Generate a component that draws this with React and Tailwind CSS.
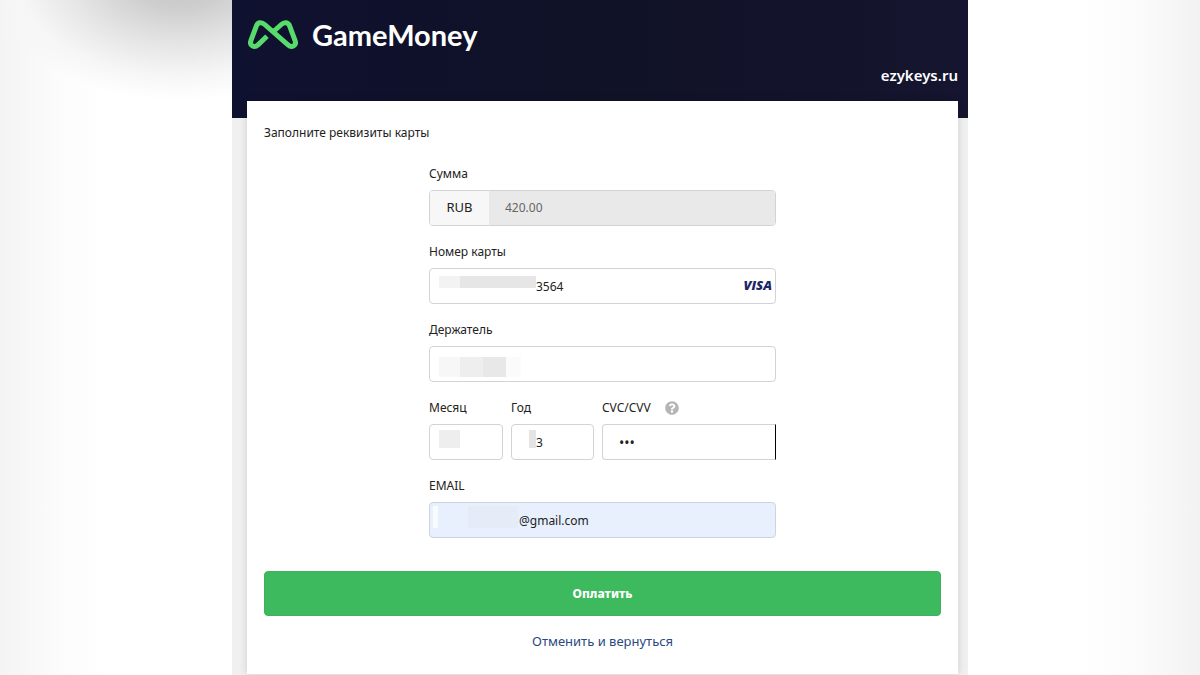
import { FaQuestionCircle } from "react-icons/fa";

const inputStyle =
  "block h-9 w-full rounded border border-[#d3d3d3] bg-white text-[#222] outline-none";

const Logo = () => (
  <svg width="50" height="30" viewBox="0 0 50 30" fill="none" aria-hidden="true">
    <path
      d="M19 16.2 10 24.9C6.2 28.4 1.2 25.6 2.9 20.6L8.2 6.4C9.6 2.2 13.4 1.5 16.7 4.5L40 24.9C43.8 28.4 48.8 25.6 47.1 20.6L41.8 6.4C40.4 2.2 36.6 1.5 33.3 4.5L25 12"
      stroke="#57dc6c"
      strokeWidth="5"
      strokeLinejoin="round"
    />
  </svg>
);

// Hides the private part of a value behind flat blocks
const Mask = ({ className, blocks }) => (
  <span className={`pointer-events-none absolute flex ${className}`}>
    {blocks.map((block, index) => (
      <span key={index} className={block} />
    ))}
  </span>
);

const Field = ({ id, label, hint, className = "", children }) => (
  <div className={className}>
    <div className="mb-1.5 flex h-5 items-center gap-3.5">
      <label htmlFor={id} className="text-xs leading-5">
        {label}
      </label>
      {hint}
    </div>
    <div className="relative">{children}</div>
  </div>
);

const PaymentForm = () => (
  <form onSubmit={(e) => e.preventDefault()}>
    <div className="mx-auto mt-[21px] flex max-w-[347px] flex-col gap-4">
      <Field id="amount" label="Сумма">
        <div className="flex h-9 overflow-hidden rounded border border-[#d3d3d3]">
          <span className="flex w-[59px] items-center justify-center bg-[#f7f7f7] text-[13px]">
            RUB
          </span>
          <input
            id="amount"
            type="text"
            defaultValue="420.00"
            disabled
            className="min-w-0 flex-1 bg-[#e9e9e9] px-4 text-xs text-[#666]"
          />
        </div>
      </Field>

      <Field id="card" label="Номер карты">
        <input
          id="card"
          type="text"
          defaultValue="3564"
          className={`${inputStyle} pr-10 pl-[106px] text-xs`}
        />
        <Mask
          className="top-2 left-2.5 h-3"
          blocks={["w-[21px] bg-[#f3f3f3]", "w-[76px] bg-[#e6e6e6]"]}
        />
        <span className="pointer-events-none absolute inset-y-0 right-1 flex items-center font-['Open_Sans'] text-[13px] font-extrabold text-[#1b2668] italic">
          VISA
        </span>
      </Field>

      <Field id="holder" label="Держатель">
        <input id="holder" type="text" className={`${inputStyle} px-4 text-xs`} />
        <Mask
          className="top-[11px] left-2.5 h-5"
          blocks={[
            "w-[21px] bg-[#f7f7f7]",
            "w-[23px] bg-[#eeeeee]",
            "w-[23px] bg-[#e8e8e8]",
            "w-[15px] bg-[#fbfbfb]",
          ]}
        />
      </Field>

      <div className="flex gap-2">
        <Field id="month" label="Месяц" className="w-[74px]">
          <input id="month" type="text" className={`${inputStyle} px-4 text-xs`} />
          <Mask
            className="top-1.5 left-2.5 h-[18px]"
            blocks={["w-[21px] bg-[#eeeeee]"]}
          />
        </Field>
        <Field id="year" label="Год" className="w-[83px]">
          <input
            id="year"
            type="text"
            defaultValue="3"
            className={`${inputStyle} pr-4 pl-6 text-xs`}
          />
          <Mask
            className="top-1.5 left-[18px] h-[18px]"
            blocks={["w-[7px] bg-[#e4e4e4]"]}
          />
        </Field>
        <Field
          id="cvc"
          label="CVC/CVV"
          className="min-w-0 flex-1"
          hint={
            <button type="button" aria-label="CVC/CVV" className="text-[#b5b5b5]">
              <FaQuestionCircle size={14} />
            </button>
          }
        >
          <input
            id="cvc"
            type="password"
            defaultValue="000"
            className={`${inputStyle} rounded-r-none border-r-black px-4 text-sm`}
          />
        </Field>
      </div>

      <Field id="email" label="EMAIL">
        <input
          id="email"
          type="text"
          defaultValue="@gmail.com"
          className="block h-9 w-full rounded border border-[#cdd3df] bg-[#e8f0fe] pr-4 pl-[89px] text-xs text-[#222] outline-none"
        />
        <Mask
          className="top-1 left-1 h-[22px]"
          blocks={[
            "w-[5px] bg-[#f8fbff]",
            "w-[30px]",
            "w-[50px] bg-[#e6ebf8]",
          ]}
        />
      </Field>
    </div>

    <button
      type="submit"
      className="mt-[33px] block h-[45px] w-full rounded border border-[#43ae5f] bg-[#3dba5d] text-xs font-extrabold text-white"
    >
      Оплатить
    </button>
    <div className="mt-[15px] text-center text-[13px] leading-5">
      <a href="#" className="text-[#2a4a80]">
        Отменить и вернуться
      </a>
    </div>
  </form>
);

const App = () => {
  return (
    <div className="min-h-screen bg-[radial-gradient(200px_120px_at_180px_-20px,#c2c2c2_0%,#cfcfcf_25%,#e6e6e6_55%,#f6f6f6_80%,transparent_100%),linear-gradient(to_right,#f4f4f4_0%,#fcfcfc_5%,#ffffff_9%,#ffffff_90%,#fbfbfb_95%,#f2f2f2_100%)] bg-no-repeat font-['Noto_Sans',sans-serif] text-[#222]">
      <main className="mx-auto flex min-h-screen w-full max-w-[736px] flex-col bg-[#f0f0f0]">
        <header className="h-[118px] bg-linear-to-r from-[#0f1130] via-[#101227] to-[#15152f] px-4 pt-[15px] text-white">
          <div className="flex h-10 items-center gap-3.5">
            <Logo />
            <h1 className="font-['Lato'] text-[29px] leading-10 font-bold">
              GameMoney
            </h1>
          </div>
          <p className="mt-2.5 -mr-1.5 text-right text-[15px] leading-5 font-semibold">
            ezykeys.ru
          </p>
        </header>

        <section className="-mt-[17px] mr-2.5 ml-[15px] bg-white px-[17px] pt-[22px] pb-[23px] shadow-[0_0_8px_rgba(0,0,0,0.15)]">
          <h2 className="text-xs leading-5">Заполните реквизиты карты</h2>
          <PaymentForm />
        </section>
      </main>
    </div>
  );
};

export default App;
